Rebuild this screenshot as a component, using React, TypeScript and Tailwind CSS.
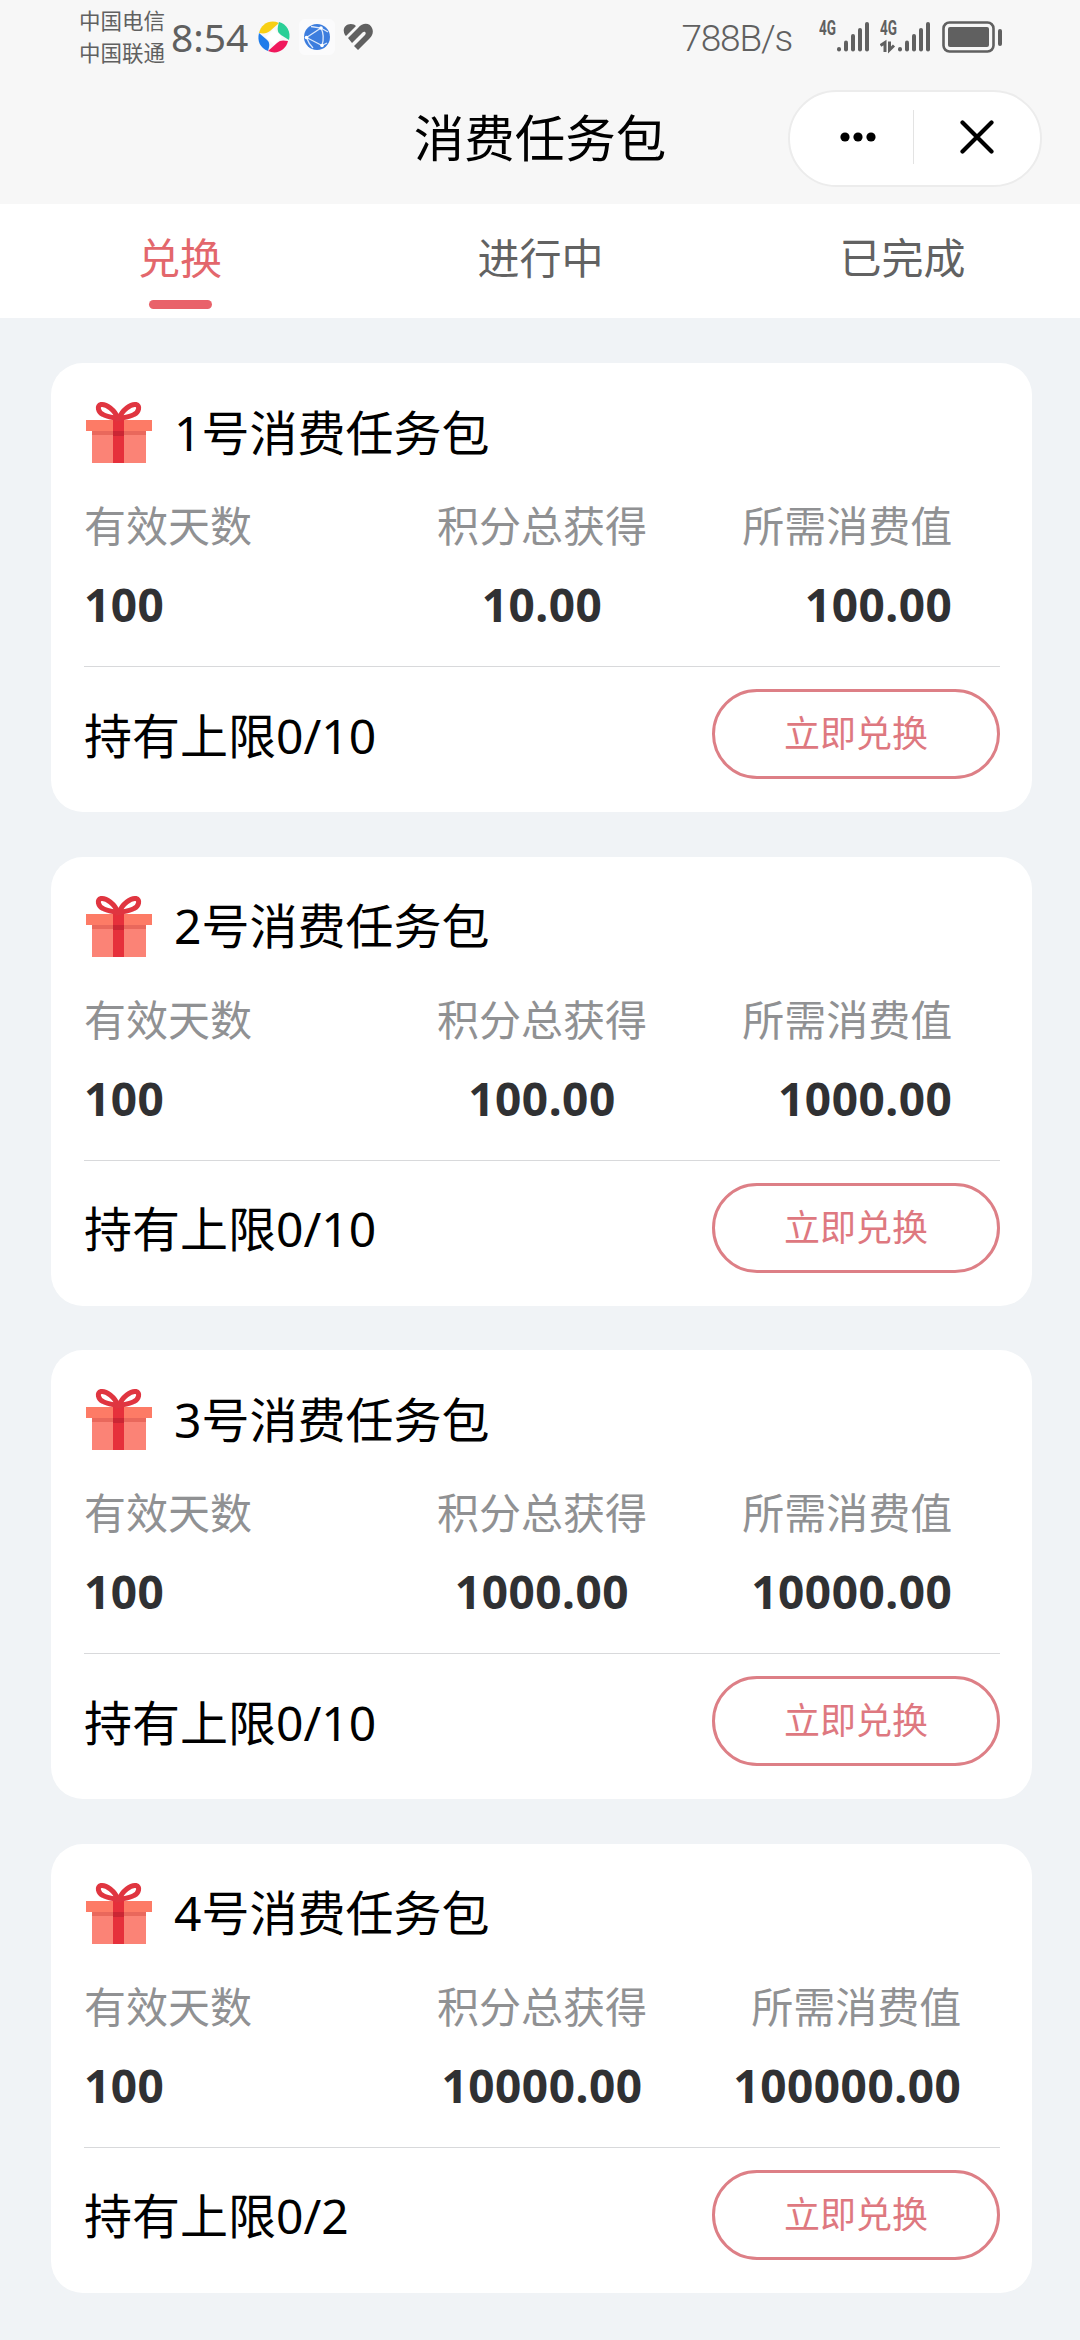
import { useState } from 'react';

type TaskPack = {
  id: number;
  days: string;
  points: string;
  cost: string;
  held: number;
  limit: number;
};

const TABS = ['兑换', '进行中', '已完成'];

const PACKS: TaskPack[] = [
  { id: 1, days: '100', points: '10.00', cost: '100.00', held: 0, limit: 10 },
  { id: 2, days: '100', points: '100.00', cost: '1000.00', held: 0, limit: 10 },
  { id: 3, days: '100', points: '1000.00', cost: '10000.00', held: 0, limit: 10 },
  { id: 4, days: '100', points: '10000.00', cost: '100000.00', held: 0, limit: 2 },
];

function GiftIcon() {
  return (
    <svg width="68" height="64" viewBox="0 0 68 64" className="shrink-0">
      <rect x="8" y="29" width="54" height="34" fill="#fb8376" />
      <rect x="8" y="29" width="54" height="6" fill="#e9685c" />
      <rect x="2" y="20" width="66" height="11" fill="#fd7b66" />
      <rect x="29" y="20" width="11" height="43" fill="#e6303b" />
      <rect x="29" y="31" width="11" height="5" fill="#cb2634" />
      <g fill="none" stroke="#e03540" strokeWidth="5">
        <path d="M34 18.500C31 10 22 3.500 17 4.500C12.500 5.500 14 12 19 14.500C23 17 29 17.500 34 18.500Z" />
        <path d="M35 18.500C38 10 47 3.500 52 4.500C56.500 5.500 55 12 50 14.500C46 17 40 17.500 35 18.500Z" />
      </g>
    </svg>
  );
}

function SignalBars({ transfer = false }: { transfer?: boolean }) {
  return (
    <svg width="50" height="40" viewBox="0 -6 50 40" className="-mt-[6px] shrink-0">
      <text
        x="0"
        y="14.500"
        textLength="17"
        lengthAdjust="spacingAndGlyphs"
        fill="#606060"
        className="font-['Roboto',sans-serif] text-[20px] font-bold"
      >
        4G
      </text>
      {transfer && (
        <g fill="none" stroke="#606060" strokeWidth="3">
          <path d="M0.500 25.500L5 22.500V32" />
          <path d="M9.500 21.500V30L14 25.500" />
        </g>
      )}
      <g stroke="#606060" strokeWidth="4" strokeLinecap="round">
        <path d="M20 29V29.500" />
        <path d="M27 22.500V29.500" />
        <path d="M34 16V29.500" />
        <path d="M41 10V29.500" />
        <path d="M48 4V29.500" />
      </g>
    </svg>
  );
}

function StatusBar() {
  return (
    <div className="flex h-[73px] items-center pl-[79px] pr-[78px] text-[#606060]">
      <div className="flex flex-col text-[21.500px] leading-[32px]">
        <span>中国电信</span>
        <span>中国联通</span>
      </div>
      <span className="ml-[6px] w-[78px] whitespace-nowrap text-[39px] leading-none">8:54</span>

      <svg width="34" height="34" viewBox="0 0 34 34" className="ml-[8px]">
        <path d="M2 13C4 4 13 -1 22 3L13 11C10 13 8 14 2 13Z" fill="#f8cf13" />
        <path d="M22 2C30 4 34 12 32 20L24 15C20 12 20 9 22 2Z" fill="#2bcf97" />
        <path d="M31 21C29 30 20 35 11 31L20 23C23 20 26 20 31 21Z" fill="#f0185c" />
        <path d="M11 31C3 28 0 21 2 13L9 19C13 22 13 25 11 31Z" fill="#1f7cea" />
        <path d="M17 9L25 17L17 25L9 17Z" fill="#fff" />
      </svg>
      <svg width="36" height="36" viewBox="0 0 36 36" className="ml-[8px]">
        <rect width="36" height="36" rx="6" fill="#fbfbfc" />
        <circle cx="18" cy="18" r="13" fill="#3c7dde" />
        <g fill="none" stroke="#dce9fb" strokeWidth="1.300">
          <path d="M7.500 18.500L22 9M7.500 18.500L23 26.500M22 9C24.500 14 25 20 23 26.500M7.500 18.500C9 23 11 26 14 29M12 7.500L22 9L29 13M23 26.500L28 24" />
        </g>
        <circle cx="7.500" cy="18.500" r="1.800" fill="#fff" />
        <circle cx="22" cy="9" r="1.800" fill="#fff" />
        <circle cx="23" cy="26.500" r="1.800" fill="#fff" />
      </svg>
      <svg width="32" height="28" viewBox="0 0 32 28" className="ml-[7px]">
        <path
          d="M3 12C-1 5 5 -1 12 1.500L14 3L4 13ZM6 15L16 5C21 -1 28 0 30 5C32 9 30 13 28 15L16 27L12 23L23 12C25 9.500 22.500 7.500 20.500 9.500L10 20Z"
          fill="#606060"
        />
      </svg>

      <span className="ml-auto whitespace-nowrap pt-[3px] font-['Roboto','Noto_Sans_CJK_SC',sans-serif] text-[37px] leading-none tracking-[-1.200px] font-light">
        788B/s
      </span>
      <div className="ml-[27px] flex items-center">
        <SignalBars />
        <div className="ml-[11px]">
          <SignalBars transfer />
        </div>
        <svg width="60" height="32" viewBox="0 0 60 32" className="ml-[12px]">
          <rect x="1.500" y="1.500" width="50" height="29" rx="6" fill="none" stroke="#606060" strokeWidth="2.600" />
          <rect x="6" y="6" width="41" height="20" rx="2" fill="#606060" />
          <rect x="56" y="8" width="4" height="17" rx="2" fill="#606060" />
        </svg>
      </div>
    </div>
  );
}

function NavBar() {
  return (
    <div className="grid h-[131px] grid-cols-[1fr_auto_1fr] pr-[38px]">
      <div />
      <h1 className="pl-[38px] pt-[27px] text-[50.500px] leading-[76px] text-black">消费任务包</h1>
      <div className="mt-[17px] flex h-[97px] w-[254px] items-center justify-self-end rounded-full border-2 border-[#ececec] bg-white pb-[3px]">
        <button className="flex flex-1 justify-center pl-[12px]">
          <svg width="36" height="10" viewBox="0 0 36 10">
            <circle cx="5" cy="5" r="4.600" />
            <circle cx="18" cy="5" r="4.600" />
            <circle cx="31" cy="5" r="4.600" />
          </svg>
        </button>
        <span className="h-[54px] w-px bg-[#e3e3e3]" />
        <button className="flex w-[126px] justify-center">
          <svg width="34" height="34" viewBox="0 0 34 34">
            <path d="M2.500 2.500L31.500 31.500M31.500 2.500L2.500 31.500" stroke="#000" strokeWidth="4.200" strokeLinecap="round" />
          </svg>
        </button>
      </div>
    </div>
  );
}

function PackCard({ pack }: { pack: TaskPack }) {
  return (
    <div className="h-[449px] rounded-[32px] bg-white pl-[33px] pr-[32px] pt-[37px]">
      <div className="flex h-[64px] items-center">
        <GiftIcon />
        <h2 className="ml-[22px] whitespace-nowrap pt-px text-[48px] leading-[64px] text-black">{pack.id}号消费任务包</h2>
      </div>

      <div className="mt-[34px] grid grid-cols-3 text-[42px] leading-[56px] text-[#909193]">
        <div>
          <p>有效天数</p>
          <p className="mt-[22px] text-[46px] font-bold tracking-[0.500px] text-[#303133]">{pack.days}</p>
        </div>
        <div className="text-center">
          <p>积分总获得</p>
          <p className="mt-[22px] text-[46px] font-bold tracking-[0.500px] text-[#303133]">{pack.points}</p>
        </div>
        <div className="justify-self-center text-right">
          <p>所需消费值</p>
          <p className="mt-[22px] text-[46px] font-bold tracking-[0.500px] text-[#303133]">{pack.cost}</p>
        </div>
      </div>

      <div className="mt-[34px] flex h-[135px] items-center justify-between border-t border-[#d8d9db]">
        <span className="pt-[3px] text-[48px] leading-[64px] text-black">
          持有上限{pack.held}/{pack.limit}
        </span>
        <button className="h-[90px] w-[288px] rounded-full border-3 border-[#dd7f86] text-[36px] text-[#de7880]">立即兑换</button>
      </div>
    </div>
  );
}

export default function App() {
  const [activeTab, setActiveTab] = useState(0);

  return (
    <div className="h-[2340px] w-[1080px] overflow-hidden bg-[#f0f3f6] font-['Noto_Sans','Noto_Sans_CJK_SC',sans-serif]">
      <header className="bg-[#f7f7f7]">
        <StatusBar />
        <NavBar />
      </header>

      {/* Tabs */}
      <div className="grid h-[114px] grid-cols-[360px_361px_363px] bg-white">
        {TABS.map((tab, i) => (
          <button
            key={tab}
            onClick={() => setActiveTab(i)}
            className={`flex flex-col items-center pt-[24px] text-[42px] leading-[60px] ${i === activeTab ? 'text-[#e3676c]' : 'text-[#626262]'}`}
          >
            {tab}
            {i === activeTab && <span className="mt-[12px] h-[9px] w-[63px] rounded-full bg-[#e9626a]" />}
          </button>
        ))}
      </div>

      {/* Task packs */}
      <div className="flex flex-col gap-[44.670px] pl-[51px] pr-[48px] pt-[45px]">
        {PACKS.map((pack) => (
          <PackCard key={pack.id} pack={pack} />
        ))}
      </div>
    </div>
  );
}
